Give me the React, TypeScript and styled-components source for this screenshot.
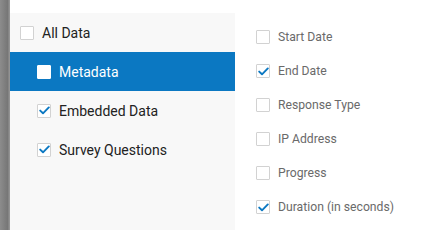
import styled, { createGlobalStyle } from 'styled-components'

const GlobalStyle = createGlobalStyle`
  html, body {
    margin: 0;
    padding: 0;
    background: #ffffff;
    font-family: Roboto, "Liberation Sans", sans-serif;
  }
`

const Layout = styled.div`
  display: flex;
  width: 425px;
  height: 230px;
  overflow: hidden;
`

const Edge = styled.div`
  width: 10px;
  flex-shrink: 0;
  background: linear-gradient(to right, #8c8c8c, #777777 75%, #9a9a9a);
`

const Sidebar = styled.div`
  width: 225px;
  flex-shrink: 0;
  padding-top: 13px;
  background: #ffffff;
  display: flex;
  flex-direction: column;
`

const SidebarBody = styled.div`
  flex: 1;
  background: #f8f8f8;
  display: flex;
  flex-direction: column;
`

const TreeRow = styled.div<{ $depth: number; $active?: boolean }>`
  display: flex;
  align-items: center;
  gap: 8px;
  height: 39px;
  padding-left: ${(p) => (p.$depth ? 27 : 10)}px;
  background: ${(p) => (p.$active ? '#0b78c2' : 'transparent')};
  color: ${(p) => (p.$active ? '#ffffff' : '#222222')};
  font-size: 14px;
`

const Fields = styled.div`
  flex: 1;
  padding: 20px 0 0 21px;
  display: flex;
  flex-direction: column;
`

const FieldRow = styled.div`
  display: flex;
  align-items: center;
  gap: 8px;
  height: 34px;
  color: #6a6a6a;
  font-size: 12.2px;
`

const Box = styled.span<{ $solid?: boolean }>`
  width: 14px;
  height: 14px;
  flex-shrink: 0;
  box-sizing: border-box;
  border: 1px solid ${(p) => (p.$solid ? '#ffffff' : '#d2d2d2')};
  border-radius: 1px;
  background: #ffffff;
  display: flex;
  align-items: center;
  justify-content: center;
`

const Check = () => (
  <svg width="11" height="9" viewBox="0 0 11 9">
    <path d="M1.2 4.6 L4 7.3 L9.8 1.4" fill="none" stroke="#0b78c2" strokeWidth="1.9" strokeLinecap="round" strokeLinejoin="round" />
  </svg>
)

const Checkbox = ({ checked, solid }: { checked?: boolean; solid?: boolean }) => (
  <Box $solid={solid}>{checked && <Check />}</Box>
)

const tree = [
  { label: 'All Data', depth: 0, checked: false },
  { label: 'Metadata', depth: 1, checked: false, active: true },
  { label: 'Embedded Data', depth: 1, checked: true },
  { label: 'Survey Questions', depth: 1, checked: true },
]

const fields = [
  { label: 'Start Date', checked: false },
  { label: 'End Date', checked: true },
  { label: 'Response Type', checked: false },
  { label: 'IP Address', checked: false },
  { label: 'Progress', checked: false },
  { label: 'Duration (in seconds)', checked: true },
]

export default function App() {
  return (
    <>
      <GlobalStyle />
      <Layout>
        <Edge />
        <Sidebar>
          <SidebarBody>
            {tree.map((t) => (
              <TreeRow key={t.label} $depth={t.depth} $active={t.active}>
                <Checkbox checked={t.checked} solid={t.active} />
                {t.label}
              </TreeRow>
            ))}
          </SidebarBody>
        </Sidebar>
        <Fields>
          {fields.map((f) => (
            <FieldRow key={f.label}>
              <Checkbox checked={f.checked} />
              {f.label}
            </FieldRow>
          ))}
        </Fields>
      </Layout>
    </>
  )
}
